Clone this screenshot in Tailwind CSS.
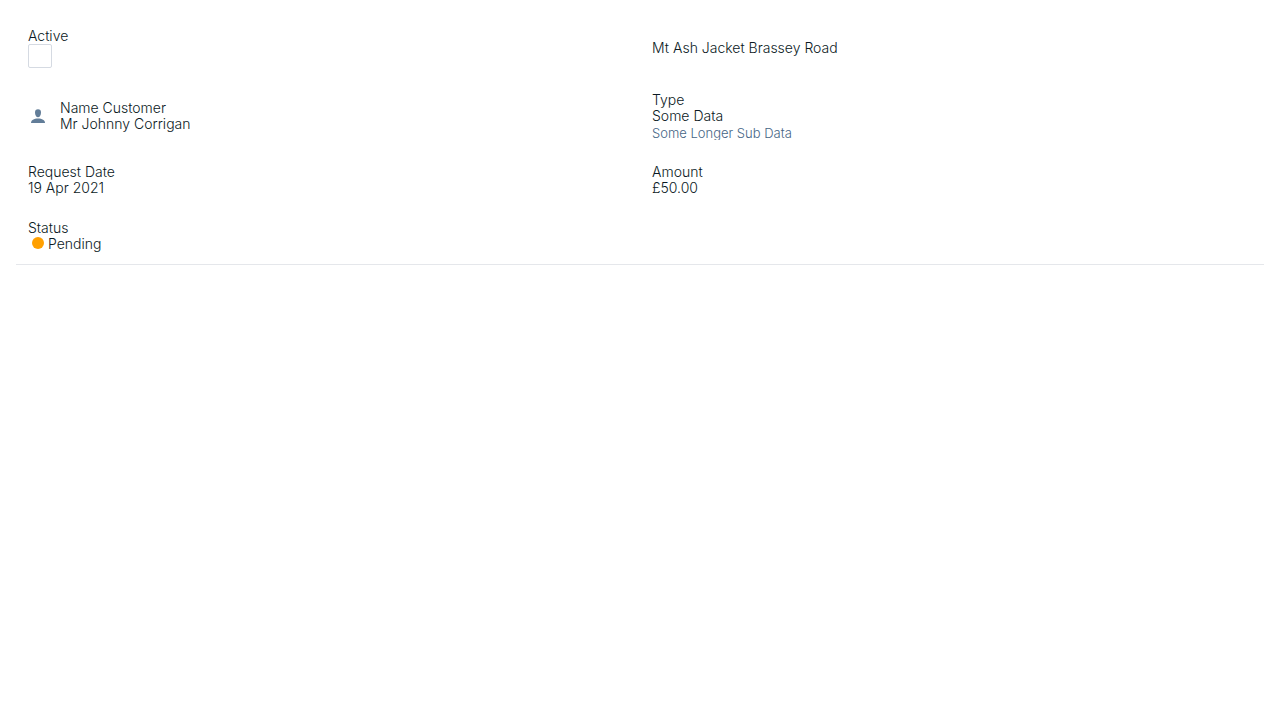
<!DOCTYPE html>
<html lang="en">
<head>
<meta charset="utf-8">
<meta name="viewport" content="width=device-width, initial-scale=1">
<title>Request</title>
<script src="https://cdn.jsdelivr.net/npm/@tailwindcss/browser@4"></script>
</head>
<body class="bg-white p-4 font-['Inter',sans-serif] text-sm leading-4 font-light text-[#0c1a24] antialiased">
<main class="grid grid-cols-2 border-b border-gray-200">
  <div class="flex flex-col items-start p-3">
    <label for="active">Active</label>
    <input id="active" type="checkbox" class="size-6 appearance-none rounded-xs border border-[#d5dae2] bg-white checked:bg-[#627d98]">
  </div>
  <div class="flex items-center p-3">Mt Ash Jacket Brassey Road</div>
  <div class="flex items-center gap-3 p-3">
    <svg class="size-5 text-[#627d98]" viewBox="0 0 20 20" fill="currentColor" aria-hidden="true"><path d="M10 3.300C8 3.300 7 4.500 7 6.400C7 8.900 8.200 11.200 10 11.200s3-2.300 3-4.800C13 4.500 12 3.300 10 3.300z"/><path d="M3 17c0-3 3-4.500 7-4.500s7 1.500 7 4.500z"/></svg>
    <div><div>Name Customer</div><div>Mr Johnny Corrigan</div></div>
  </div>
  <div class="p-3"><div>Type</div><div>Some Data</div><div class="h-4 overflow-hidden text-[13px] leading-[18px] text-[#456585]">Some Longer Sub Data</div></div>
  <div class="p-3"><div>Request Date</div><div>19 Apr 2021</div></div>
  <div class="p-3"><div>Amount</div><div>£50.00</div></div>
  <div class="p-3"><div>Status</div><div class="flex items-start gap-1 pl-1"><span class="mt-px size-3 rounded-full bg-[#ffa000]"></span>Pending</div></div>
</main>
</body>
</html>
